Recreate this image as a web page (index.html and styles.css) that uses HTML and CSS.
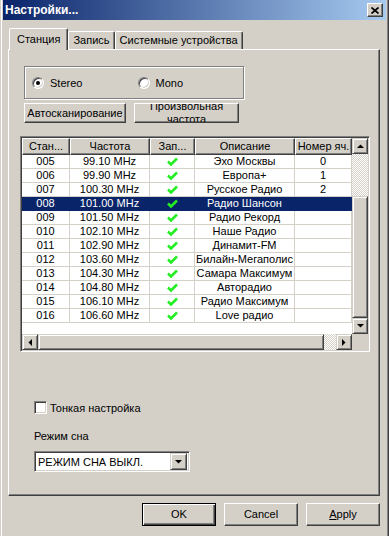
FILE: index.html
```html
<!DOCTYPE html>
<html lang="ru">
<head>
  <meta charset="UTF-8" />
  <title>Настройки...</title>
  <link rel="stylesheet" href="styles.css">
</head>
<body>
  <div class="window">
    <div class="frame">
      <div class="titlebar">
        <span class="title">Настройки...</span>
        <span class="close-btn">
          <svg width="8" height="7" viewBox="0 0 8 7"><path d="M0.5 0.5 L7.5 6.5 M7.5 0.5 L0.5 6.5"/></svg>
        </span>
      </div>

      <div class="tabs">
        <div class="tab active">Станция</div>
        <div class="tab">Запись</div>
        <div class="tab">Системные устройства</div>
      </div>

      <div class="panel">
        <div class="group">
          <label class="radio-opt"><span class="radio checked"></span>Stereo</label>
          <label class="radio-opt"><span class="radio"></span>Mono</label>
        </div>

        <div class="btn-row">
          <button class="btn btn-scan">Автосканирование</button>
          <button class="btn btn-freq">Произвольная частота</button>
        </div>

        <div class="listview">
          <div class="table-area">
            <table>
              <colgroup>
                <col class="c1"><col class="c2"><col class="c3"><col class="c4"><col class="c5">
              </colgroup>
              <thead>
                <tr><th>Стан...</th><th>Частота</th><th>Зап...</th><th>Описание</th><th>Номер яч.</th></tr>
              </thead>
              <tbody>
                <tr><td>005</td><td>99.10 MHz</td><td><svg class="check" width="11" height="9" viewBox="0 0 11 9"><path d="M1 4.5 L4 7.5 L10 1.5"/></svg></td><td>Эхо Москвы</td><td>0</td></tr>
                <tr><td>006</td><td>99.90 MHz</td><td><svg class="check" width="11" height="9" viewBox="0 0 11 9"><path d="M1 4.5 L4 7.5 L10 1.5"/></svg></td><td>Европа+</td><td>1</td></tr>
                <tr><td>007</td><td>100.30 MHz</td><td><svg class="check" width="11" height="9" viewBox="0 0 11 9"><path d="M1 4.5 L4 7.5 L10 1.5"/></svg></td><td>Русское Радио</td><td>2</td></tr>
                <tr class="sel"><td>008</td><td>101.00 MHz</td><td><svg class="check" width="11" height="9" viewBox="0 0 11 9"><path d="M1 4.5 L4 7.5 L10 1.5"/></svg></td><td>Радио Шансон</td><td></td></tr>
                <tr><td>009</td><td>101.50 MHz</td><td><svg class="check" width="11" height="9" viewBox="0 0 11 9"><path d="M1 4.5 L4 7.5 L10 1.5"/></svg></td><td>Радио Рекорд</td><td></td></tr>
                <tr><td>010</td><td>102.10 MHz</td><td><svg class="check" width="11" height="9" viewBox="0 0 11 9"><path d="M1 4.5 L4 7.5 L10 1.5"/></svg></td><td>Наше Радио</td><td></td></tr>
                <tr><td>011</td><td>102.90 MHz</td><td><svg class="check" width="11" height="9" viewBox="0 0 11 9"><path d="M1 4.5 L4 7.5 L10 1.5"/></svg></td><td>Динамит-FM</td><td></td></tr>
                <tr><td>012</td><td>103.60 MHz</td><td><svg class="check" width="11" height="9" viewBox="0 0 11 9"><path d="M1 4.5 L4 7.5 L10 1.5"/></svg></td><td>Билайн-Мегаполис</td><td></td></tr>
                <tr><td>013</td><td>104.30 MHz</td><td><svg class="check" width="11" height="9" viewBox="0 0 11 9"><path d="M1 4.5 L4 7.5 L10 1.5"/></svg></td><td>Самара Максимум</td><td></td></tr>
                <tr><td>014</td><td>104.80 MHz</td><td><svg class="check" width="11" height="9" viewBox="0 0 11 9"><path d="M1 4.5 L4 7.5 L10 1.5"/></svg></td><td>Авторадио</td><td></td></tr>
                <tr><td>015</td><td>106.10 MHz</td><td><svg class="check" width="11" height="9" viewBox="0 0 11 9"><path d="M1 4.5 L4 7.5 L10 1.5"/></svg></td><td>Радио Максимум</td><td></td></tr>
                <tr><td>016</td><td>106.60 MHz</td><td><svg class="check" width="11" height="9" viewBox="0 0 11 9"><path d="M1 4.5 L4 7.5 L10 1.5"/></svg></td><td>Love радио</td><td></td></tr>
              </tbody>
            </table>
          </div>

          <div class="vscroll">
            <div class="sb-btn"><svg width="7" height="4" viewBox="0 0 7 4"><polygon points="0,4 7,4 3.5,0.5"/></svg></div>
            <div class="sb-hatch sb-hatch-v"></div>
            <div class="sb-thumb"></div>
            <div class="sb-btn"><svg width="7" height="4" viewBox="0 0 7 4"><polygon points="0,0 7,0 3.5,3.5"/></svg></div>
          </div>

          <div class="hscroll">
            <div class="sb-btn"><svg width="4" height="7" viewBox="0 0 4 7"><polygon points="4,0 4,7 0.5,3.5"/></svg></div>
            <div class="sb-thumb"></div>
            <div class="sb-hatch sb-hatch-h"></div>
            <div class="sb-btn"><svg width="4" height="7" viewBox="0 0 4 7"><polygon points="0,0 0,7 3.5,3.5"/></svg></div>
          </div>

          <div class="corner"></div>
        </div>

        <div class="options">
          <label class="fine"><span class="checkbox"></span>Тонкая настройка</label>
          <div class="sleep-label">Режим сна</div>
          <div class="combo">
            <span>РЕЖИМ СНА ВЫКЛ.</span>
            <span class="combo-btn"><svg width="7" height="4" viewBox="0 0 7 4"><polygon points="0,0 7,0 3.5,3.5"/></svg></span>
          </div>
        </div>
      </div>

      <div class="footer">
        <button class="btn btn-wide btn-default">OK</button>
        <button class="btn btn-wide">Cancel</button>
        <button class="btn btn-wide"><u>A</u>pply</button>
      </div>
    </div>
  </div>
</body>
</html>
```

FILE: styles.css
```css
:root {
  --face: #d4d0c8;
  --shadow: #808080;
  --dark: #404040;
  --select: #0a246a;
}
* {
  box-sizing: border-box;
}
body {
  margin: 0;
  background: var(--face);
  font-family: "Liberation Sans", Arial, sans-serif;
  font-size: 11px;
  color: #000;
}
.window {
  width: 389px;
  height: 536px;
  border-left: 1px solid var(--face);
  border-right: 1px solid var(--dark);
}
.frame {
  height: 100%;
  border-left: 1px solid #fff;
  border-right: 1px solid var(--shadow);
  padding: 0 1px;
}

/* title bar */
.titlebar {
  height: 20px;
  display: flex;
  align-items: center;
  justify-content: space-between;
  padding: 0 3px 0 2px;
  background: linear-gradient(to right, #0a246a, #a6caf0);
  color: #fff;
  font-weight: bold;
  font-size: 12px;
}
.close-btn {
  width: 16px;
  height: 14px;
  display: flex;
  align-items: center;
  justify-content: center;
  background: var(--face);
  border: 1px solid;
  border-color: #fff var(--dark) var(--dark) #fff;
  box-shadow: inset -1px -1px var(--shadow);
}
.close-btn path {
  stroke: #000;
  stroke-width: 1.7;
  fill: none;
}

/* tabs */
.tabs {
  display: flex;
  align-items: flex-end;
  margin: 8px 0 0 6px;
}
.tab {
  height: 18px;
  padding: 1px 4px 0;
  line-height: 14px;
  border: 1px solid;
  border-bottom: none;
  border-color: #fff var(--dark) transparent #fff;
  border-radius: 2px 2px 0 0;
  box-shadow: inset -1px 0 var(--shadow);
}
.tab.active {
  position: relative;
  height: 22px;
  padding: 3px 7px 0;
  margin-bottom: -1px;
  background: var(--face);
}
.panel {
  height: 447px;
  margin: 0 6px 0 5px;
  padding: 16px 11px 0;
  border: 1px solid;
  border-color: #fff var(--dark) var(--dark) #fff;
  box-shadow: inset -1px -1px var(--shadow);
}

/* radio group */
.group {
  margin-left: 4px;
  width: 220px;
  height: 33px;
  padding-left: 7px;
  display: flex;
  align-items: center;
  border: 1px solid var(--shadow);
  box-shadow: inset 1px 1px #fff, 1px 1px #fff;
}
.radio-opt {
  width: 106px;
  display: flex;
  align-items: center;
  gap: 6px;
}
.radio {
  width: 12px;
  height: 12px;
  border-radius: 50%;
  border: 1px solid;
  border-color: var(--shadow) #fff #fff var(--shadow);
  box-shadow: inset 1px 1px var(--dark), inset -1px -1px var(--face);
  background: #fff;
  display: flex;
  align-items: center;
  justify-content: center;
}
.radio.checked::after {
  content: "";
  width: 4px;
  height: 4px;
  border-radius: 50%;
  background: #000;
}

/* buttons */
.btn-row {
  display: flex;
  gap: 8px;
  margin: 4px 0 0 4px;
}
.btn {
  height: 20px;
  padding: 0;
  display: flex;
  align-items: center;
  justify-content: center;
  overflow: hidden;
  font-family: inherit;
  font-size: 11px;
  line-height: 13px;
  color: #000;
  text-align: center;
  background: var(--face);
  border: 1px solid;
  border-color: #fff var(--dark) var(--dark) #fff;
  box-shadow: inset -1px -1px var(--shadow);
}
.btn-scan {
  width: 102px;
}
.btn-freq {
  width: 105px;
}

/* list view */
.listview {
  width: 350px;
  height: 216px;
  margin-top: 13px;
  padding: 1px;
  display: grid;
  grid-template-columns: 1fr 16px;
  grid-template-rows: 1fr 16px;
  background: #fff;
  border: 1px solid;
  border-color: var(--shadow) #fff #fff var(--shadow);
  box-shadow: inset 1px 1px var(--dark), inset -1px -1px var(--face);
}
.table-area {
  overflow: hidden;
  background: #fff;
}
table {
  width: 330px;
  table-layout: fixed;
  border-collapse: separate;
  border-spacing: 0;
}
.c1 { width: 48px; }
.c2 { width: 80px; }
.c3 { width: 45px; }
.c4 { width: 100px; }
.c5 { width: 57px; }
th {
  padding: 0;
  line-height: 15px;
  font-weight: normal;
  white-space: nowrap;
  overflow: hidden;
  background: var(--face);
  border: 1px solid;
  border-color: #fff var(--dark) var(--dark) #fff;
  box-shadow: inset -1px -1px var(--shadow);
}
td {
  padding: 0;
  height: 14px;
  line-height: 13px;
  text-align: center;
  white-space: nowrap;
  overflow: hidden;
  border-right: 1px solid var(--face);
  border-bottom: 1px solid var(--face);
}
tr.sel td {
  background: var(--select);
  color: #fff;
  border-color: var(--select);
}
.check {
  display: inline-block;
  vertical-align: -1px;
}
.check path {
  fill: none;
  stroke: #22ee22;
  stroke-width: 2.6;
}

/* scroll bars */
.vscroll {
  display: flex;
  flex-direction: column;
}
.hscroll {
  display: flex;
}
.sb-btn {
  width: 16px;
  height: 16px;
  flex: none;
  display: flex;
  align-items: center;
  justify-content: center;
  background: var(--face);
  border: 1px solid;
  border-color: var(--face) var(--dark) var(--dark) var(--face);
  box-shadow: inset 1px 1px #fff, inset -1px -1px var(--shadow);
}
.sb-btn polygon,
.combo-btn polygon {
  fill: #000;
}
.sb-thumb {
  flex: 1;
  background: var(--face);
  border: 1px solid;
  border-color: var(--face) var(--dark) var(--dark) var(--face);
  box-shadow: inset 1px 1px #fff, inset -1px -1px var(--shadow);
}
.sb-hatch {
  background-color: #fff;
  background-image: conic-gradient(var(--face) 25%, #fff 0 50%, var(--face) 0 75%, #fff 0);
  background-size: 2px 2px;
}
.sb-hatch-v {
  height: 42px;
}
.sb-hatch-h {
  width: 12px;
}
.corner {
  background: var(--face);
}

/* bottom options */
.options {
  margin-left: 14px;
}
.fine {
  margin-top: 49px;
  display: flex;
  align-items: center;
  gap: 3px;
}
.checkbox {
  width: 13px;
  height: 13px;
  background: #fff;
  border: 1px solid;
  border-color: var(--shadow) #fff #fff var(--shadow);
  box-shadow: inset 1px 1px var(--dark), inset -1px -1px var(--face);
}
.sleep-label {
  margin-top: 16px;
  line-height: 13px;
}
.combo {
  width: 156px;
  height: 21px;
  margin-top: 8px;
  padding: 2px 2px 2px 3px;
  display: flex;
  align-items: center;
  justify-content: space-between;
  background: #fff;
  border: 1px solid;
  border-color: var(--shadow) #fff #fff var(--shadow);
  box-shadow: inset 1px 1px var(--dark), inset -1px -1px var(--face);
}
.combo-btn {
  width: 17px;
  height: 17px;
  display: flex;
  align-items: center;
  justify-content: center;
  background: var(--face);
  border: 1px solid;
  border-color: var(--face) var(--dark) var(--dark) var(--face);
  box-shadow: inset 1px 1px #fff, inset -1px -1px var(--shadow);
}

/* dialog buttons */
.footer {
  display: flex;
  justify-content: flex-end;
  gap: 8px;
  margin: 7px 6px 0 0;
}
.btn-wide {
  width: 74px;
  height: 23px;
}
.btn-default {
  border-color: #000;
  box-shadow: inset 1px 1px #fff, inset -1px -1px var(--dark), inset -2px -2px var(--shadow);
}
```
